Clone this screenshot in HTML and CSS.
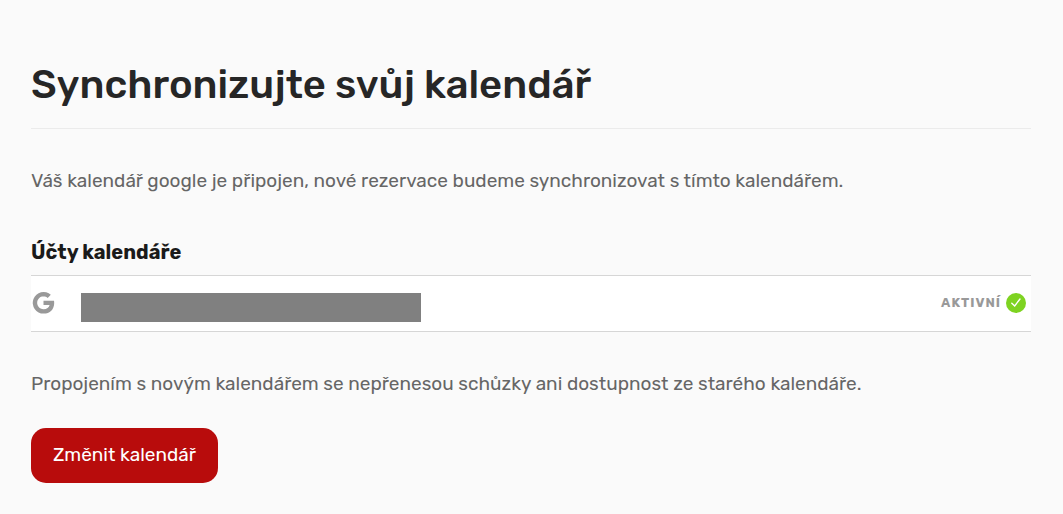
FILE: index.html
```html
<!DOCTYPE html>
<html lang="cs">
<head>
    <meta charset="UTF-8">
    <meta name="viewport" content="width=device-width, initial-scale=1.0">
    <title>Synchronizujte svůj kalendář</title>
    <link rel="stylesheet" href="styles.css">
</head>
<body>
    <main class="container">
        <h1 class="page-title">Synchronizujte svůj kalendář</h1>
        <p class="text">Váš kalendář google je připojen, nové rezervace budeme synchronizovat s tímto kalendářem.</p>

        <h2 class="section-title">Účty kalendáře</h2>
        <div class="account">
            <svg class="google-icon" viewBox="0 0 24 24" aria-hidden="true">
                <path d="M12.5 9.7v4.3h6.1c-.6 2.6-2.7 4.2-6 4.2a6.4 6.4 0 1 1 4.1-11.3l3.1-3.1A10.8 10.8 0 1 0 12.6 22.6c6.4 0 10.6-4.4 10.6-10.7 0-.8-.1-1.5-.2-2.2z"/>
            </svg>
            <div class="account-name"></div>
            <span class="status">Aktivní</span>
            <svg class="check-icon" viewBox="0 0 20 20" aria-hidden="true">
                <circle cx="10" cy="10" r="10"/>
                <path d="M5.8 10.2l2.9 2.7 5.3-6.9"/>
            </svg>
        </div>

        <p class="text">Propojením s novým kalendářem se nepřenesou schůzky ani dostupnost ze starého kalendáře.</p>
        <button type="button" class="change-button">Změnit kalendář</button>
    </main>
</body>
</html>
```
FILE: styles.css
```css
body {
    font-family: Rubik, Roboto, "Liberation Sans", sans-serif;
    margin: 0;
    background-color: #fafafa;
    color: #262626;
}

.container {
    padding: 61px 32px 30px 31px;
}

.page-title {
    margin: 0 0 40px;
    padding-bottom: 19px;
    border-bottom: 1px solid #ebebeb;
    font-size: 40px;
    line-height: 48px;
    font-weight: 500;
}

.text {
    margin: 0;
    font-size: 19px;
    line-height: 24px;
    color: #666;
}

.section-title {
    margin: 47px 0 11px;
    font-size: 20px;
    line-height: 24px;
    font-weight: 700;
    color: #1a1a1a;
}

.account {
    display: flex;
    align-items: center;
    height: 54px;
    margin-bottom: 40px;
    padding: 0 5px 1px 0;
    border-top: 1px solid #d6d6d6;
    border-bottom: 1px solid #d6d6d6;
    background-color: #fff;
}

.google-icon {
    width: 24px;
    height: 24px;
    fill: #999;
}

.account-name {
    width: 340px;
    height: 29px;
    margin: 9px auto 0 26px;
    background-color: #808080;
}

.status {
    margin-right: 5px;
    font-size: 13px;
    line-height: 16px;
    font-weight: 700;
    letter-spacing: 1px;
    text-transform: uppercase;
    color: #999;
}

.check-icon {
    width: 20px;
    height: 20px;
    fill: #7ed321;
}

.check-icon path {
    fill: none;
    stroke: #fff;
    stroke-width: 1.4;
    stroke-linecap: round;
}

.change-button {
    display: block;
    margin-top: 32px;
    padding: 0 22px 2px;
    height: 55px;
    border: none;
    border-radius: 15px;
    background-color: #b80c0c;
    color: #fff;
    font-family: inherit;
    font-size: 19px;
    cursor: pointer;
}
```
